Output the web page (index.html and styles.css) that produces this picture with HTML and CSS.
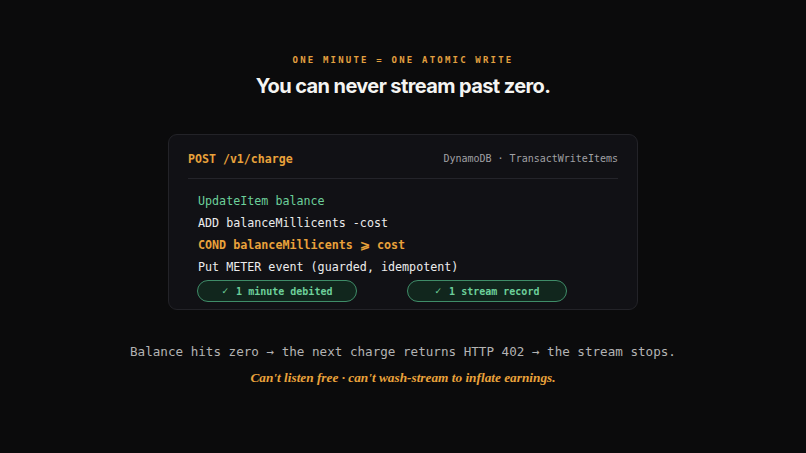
FILE: index.html
```html
<!DOCTYPE html>
<html lang="en">
<head>
<meta charset="utf-8">
<link rel="stylesheet" href="styles.css">
</head>
<body>
<main class="page">
  <div class="eyebrow">ONE MINUTE = ONE ATOMIC WRITE</div>
  <h1 class="title">You can never stream past zero.</h1>
  <section class="card">
    <header class="card-head">
      <span class="method">POST /v1/charge</span>
      <span class="meta">DynamoDB · TransactWriteItems</span>
    </header>
    <div class="code">
      <div class="line green">UpdateItem balance</div>
      <div class="line">ADD balanceMillicents -cost</div>
      <div class="line orange">COND balanceMillicents ⩾ cost</div>
      <div class="line">Put METER event (guarded, idempotent)</div>
      <div class="pills">
        <span class="pill"><span class="check">✓</span>1 minute debited</span>
        <span class="pill"><span class="check">✓</span>1 stream record</span>
      </div>
    </div>
  </section>
  <p class="note">Balance hits zero → the next charge returns HTTP 402 → the stream stops.</p>
  <p class="tagline">Can't listen free · can't wash-stream to inflate earnings.</p>
</main>
</body>
</html>
```
FILE: styles.css
```css
html, body {
  margin: 0;
  padding: 0;
  background: #0b0b0c;
  height: 100%;
}
.page {
  display: flex;
  flex-direction: column;
  align-items: center;
  padding-top: 54px;
}
.eyebrow {
  font-family: "DejaVu Sans Mono", monospace;
  font-size: 9px;
  font-weight: 700;
  letter-spacing: 2.2px;
  line-height: 12px;
  color: #e3a040;
}
.title {
  margin: 0;
  font-family: Inter, "Noto Sans", sans-serif;
  font-size: 20px;
  font-weight: 700;
  letter-spacing: -0.6px;
  line-height: 24px;
  color: #f4f4f2;
  margin-top: 8px;
}
.card {
  box-sizing: border-box;
  width: 470px;
  margin-top: 36px;
  background: #111115;
  border: 1px solid #232328;
  border-radius: 9px;
  padding: 0 19px 7px;
}
.card-head {
  display: flex;
  justify-content: space-between;
  align-items: center;
  padding: 16px 0 11px;
  line-height: 16px;
  border-bottom: 1px solid #24242a;
}
.method {
  font-family: "DejaVu Sans Mono", monospace;
  font-size: 11.6px;
  font-weight: 700;
  color: #e9a23b;
}
.meta {
  font-family: "DejaVu Sans Mono", monospace;
  font-size: 10px;
  color: #a0a0a4;
}
.code {
  padding: 11px 0 0 10px;
}
.line {
  font-family: "DejaVu Sans Mono", monospace;
  font-size: 11.7px;
  line-height: 22px;
  color: #ececec;
}
.line.green { color: #6ccf9a; }
.line.orange { color: #e9a23b; font-weight: 700; }
.pills {
  display: flex;
  gap: 50px;
  margin: 2px 0 0 -1px;
}
.pill {
  box-sizing: border-box;
  width: 160px;
  height: 22px;
  display: flex;
  align-items: center;
  justify-content: center;
  gap: 7px;
  border: 1px solid #3f8c68;
  border-radius: 11px;
  background: #11261d;
  font-family: "DejaVu Sans Mono", monospace;
  font-size: 10px;
  font-weight: 700;
  color: #6ccf9a;
  white-space: pre;
}
.check {
  font-family: "DejaVu Sans", sans-serif;
  font-size: 9px;
}
.note {
  margin: 33px 0 0;
  font-family: "DejaVu Sans Mono", monospace;
  font-size: 12.6px;
  line-height: 18px;
  color: #b3b3b3;
}
.tagline {
  margin: 8px 0 0;
  font-family: "Liberation Serif", serif;
  font-style: italic;
  font-weight: 700;
  font-size: 13.3px;
  line-height: 18px;
  color: #e9a23b;
}
```
